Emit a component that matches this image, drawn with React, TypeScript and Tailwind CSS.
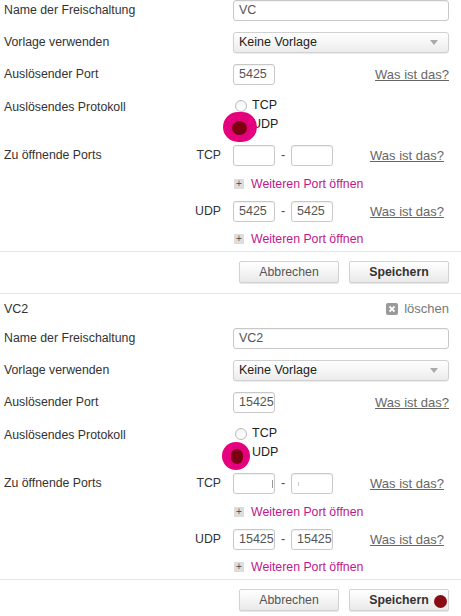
import React from "react";

const font = { fontFamily: '"Liberation Sans", Arial, sans-serif' };

function TextBox({ value, className = "" }: { value: string; className?: string }) {
  return (
    <div
      className={
        "flex h-[21px] items-center rounded-[3px] border border-[#c8c8c8] bg-white px-[5px] text-[12.5px] text-[#555] shadow-[inset_0_1px_1px_rgba(0,0,0,0.06)] " +
        className
      }
    >
      {value}
    </div>
  );
}

function Help({ className = "" }: { className?: string }) {
  return <span className={"text-[13px] text-[#666] underline " + className}>Was ist das?</span>;
}

function MoreLink() {
  return (
    <div className="flex h-[16px] items-center pl-[1px]">
      <span className="flex h-[10px] w-[10px] items-center justify-center bg-[#ddd] text-[10px] leading-none text-[#555]">
        +
      </span>
      <span className="ml-[7px] text-[12.3px] text-[#c0178d]">Weiteren Port öffnen</span>
    </div>
  );
}

function PortRange({ a, b, marks }: { a: string; b: string; marks?: boolean }) {
  return (
    <div className="flex items-center">
      <TextBox value={a} className="w-[42px]" />
      <span className="w-[16px] text-center text-[12.5px] text-[#444]">-</span>
      <TextBox value={b} className="w-[42px]" />
      {marks && (
        <>
          <span className="absolute ml-[39px] h-[8px] w-px bg-[#999]" />
          <span className="absolute ml-[65px] h-[4px] w-px bg-[#ccc]" />
        </>
      )}
      <Help className="ml-[37px]" />
    </div>
  );
}

function Row({ label, children, top = false }: { label?: React.ReactNode; children: React.ReactNode; top?: boolean }) {
  return (
    <div className={"flex " + (top ? "items-start" : "items-center")}>
      <div className="w-[233px] shrink-0 pl-[4px] text-[12.3px] text-[#333]">{label}</div>
      <div className="flex-1 pr-[12px]">{children}</div>
    </div>
  );
}

function Radio({ label }: { label: string }) {
  return (
    <div className="flex h-[19px] items-center pl-[2px]">
      <span className="h-[12px] w-[12px] rounded-full border border-[#bbb] bg-gradient-to-b from-[#f4f4f4] to-white" />
      <span className="ml-[5px] text-[12.5px] text-[#222]">{label}</span>
    </div>
  );
}

function Form({ name, port, udp, marks }: { name: string; port: string; udp: string; marks?: boolean }) {
  return (
    <div className="flex flex-col">
      <Row label="Name der Freischaltung">
        <TextBox value={name} />
      </Row>
      <div className="mt-[11px]">
        <Row label="Vorlage verwenden">
          <div className="flex h-[21px] items-center justify-between rounded-[3px] border border-[#d0d0d0] bg-gradient-to-b from-white to-[#ececec] pl-[5px] pr-[10px] text-[12.5px] text-[#222] shadow-[0_1px_1px_rgba(0,0,0,0.08)]">
            <span>Keine Vorlage</span>
            <span className="h-0 w-0 border-x-[4px] border-t-[5px] border-x-transparent border-t-[#aaa]" />
          </div>
        </Row>
      </div>
      <div className="mt-[11px]">
        <Row label="Auslösender Port">
          <div className="flex items-center justify-between">
            <TextBox value={port} className="w-[42px]" />
            <Help />
          </div>
        </Row>
      </div>
      <div className="mt-[11px]">
        <Row label={<div className="pt-[2px] leading-[19px]">Auslösendes Protokoll</div>} top>
          <Radio label="TCP" />
          <Radio label="UDP" />
        </Row>
      </div>
      <div className="mt-[11px] flex">
        <div className="flex w-[233px] shrink-0 justify-between pl-[4px] pr-[12px] text-[12.3px] text-[#333]">
          <div className="flex flex-col">
            <span className="flex h-[21px] items-center">Zu öffnende Ports</span>
          </div>
          <div className="flex flex-col items-end">
            <span className="flex h-[21px] items-center">TCP</span>
            <span className="mt-[35px] flex h-[21px] items-center">UDP</span>
          </div>
        </div>
        <div className="flex flex-col">
          <PortRange a="" b="" marks={marks} />
          <div className="mt-[10px]">
            <MoreLink />
          </div>
          <div className="mt-[9px]">
            <PortRange a={udp} b={udp} />
          </div>
          <div className="mt-[9px]">
            <MoreLink />
          </div>
        </div>
      </div>
      <div className="mt-[4px] border-t border-[#e6e6e6]" />
      <div className="mb-[10px] mt-[9px] flex justify-end gap-[10px] pr-[12px]">
        <button className="h-[22px] w-[100px] rounded-[2px] border border-[#d2d2d2] bg-gradient-to-b from-white to-[#e9e9e9] text-[12.3px] text-[#555] shadow-[0_1px_1px_rgba(0,0,0,0.1)]">
          Abbrechen
        </button>
        <button className="h-[22px] w-[100px] rounded-[2px] border border-[#d2d2d2] bg-gradient-to-b from-white to-[#e9e9e9] text-[12.3px] font-bold text-[#333] shadow-[0_1px_1px_rgba(0,0,0,0.1)]">
          Speichern
        </button>
      </div>
      <div className="border-t border-[#e6e6e6]" />
    </div>
  );
}

export default function App() {
  return (
    <div className="relative h-[616px] w-[461px] overflow-hidden bg-white" style={font}>
      <Form name="VC" port="5425" udp="5425" />
      <div className="flex h-[30px] items-center justify-between pl-[4px] pr-[12px] text-[12.5px]">
        <span className="text-[#333]">VC2</span>
        <span className="flex items-center text-[13px] text-[#777]">
          <span className="mr-[6px] flex h-[12px] w-[12px] items-center justify-center rounded-[2px] bg-[#9a9a9a]">
            <svg width="8" height="8" viewBox="0 0 8 8">
              <path d="M1.5 1.5 L6.5 6.5 M6.5 1.5 L1.5 6.5" stroke="#fff" strokeWidth="1.8" />
            </svg>
          </span>
          löschen
        </span>
      </div>
      <div className="mt-[4px]">
        <Form name="VC2" port="15425" udp="15425" marks />
      </div>

      {/* markers drawn over the screenshot */}
      <div className="absolute left-[223px] top-[112px] h-[30px] w-[34px] rounded-full bg-[#e5007d]" />
      <div className="absolute left-[232px] top-[121px] h-[14px] w-[15px] rounded-full bg-[#7c0012]" />
      <div className="absolute left-[222px] top-[442px] h-[28px] w-[28px] rounded-full bg-[#e5007d]" />
      <div className="absolute left-[231px] top-[449px] h-[15px] w-[12px] rounded-full bg-[#7c0012]" />
      <div className="absolute left-[434px] top-[595px] h-[13px] w-[13px] rounded-full bg-[#8a0a14]" />
    </div>
  );
}
